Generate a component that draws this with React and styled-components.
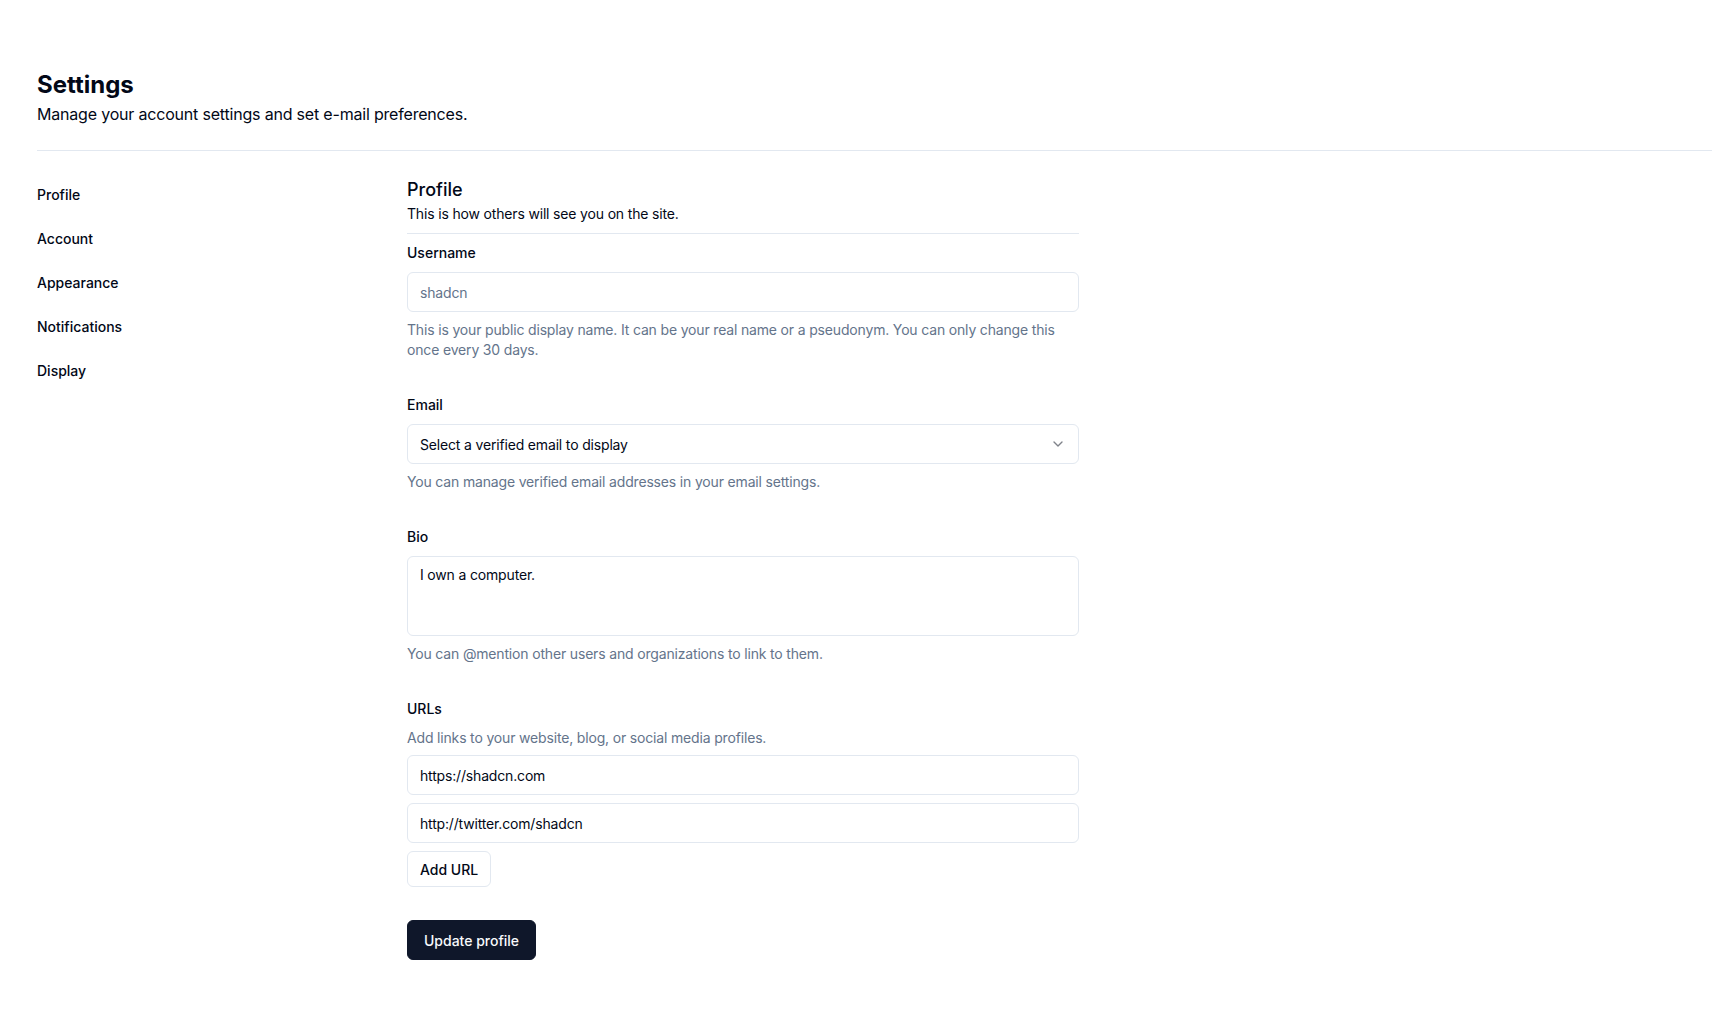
import React from "react";
import styled, { createGlobalStyle } from "styled-components";
import { ChevronDown } from "lucide-react";

const GlobalStyle = createGlobalStyle`
  * {
    box-sizing: border-box;
  }
  body {
    margin: 0;
    background: #ffffff;
    color: #020817;
    font-family: Inter, "Noto Sans", "Liberation Sans", sans-serif;
    -webkit-font-smoothing: antialiased;
  }
`;

const Page = styled.div`
  padding: 69px 0 64px 37px;
`;

const Header = styled.header`
  display: flex;
  flex-direction: column;
`;

const Title = styled.h2`
  margin: 0;
  font-size: 24px;
  line-height: 32px;
  font-weight: 700;
`;

const Lead = styled.p`
  margin: 1px 0 0;
  font-size: 16px;
  line-height: 24px;
  letter-spacing: -0.012em;
  color: #020817;
`;

const Separator = styled.hr`
  margin: ${(p) => p.$space || "0"};
  border: 0;
  height: 1px;
  background: #e2e8f0;
`;

const Body = styled.div`
  display: flex;
  gap: 48px;
`;

const Sidebar = styled.nav`
  width: 322px;
  flex-shrink: 0;
  display: flex;
  flex-direction: column;
  gap: 8px;
`;

const NavItem = styled.a`
  height: 36px;
  display: flex;
  align-items: center;
  font-size: 14px;
  font-weight: 500;
  color: #020817;
  text-decoration: none;
  cursor: pointer;
`;

const Content = styled.section`
  width: 672px;
`;

const SectionTitle = styled.h3`
  margin: 0;
  font-size: 18px;
  line-height: 28px;
  font-weight: 500;
`;

const SectionLead = styled.p`
  margin: 0;
  font-size: 14px;
  line-height: 20px;
  letter-spacing: -0.012em;
`;

const Form = styled.form`
  display: flex;
  flex-direction: column;
  gap: 35px;
`;

const Field = styled.div`
  display: flex;
  flex-direction: column;
`;

const Label = styled.label`
  font-size: 14px;
  line-height: 20px;
  font-weight: 500;
  margin-bottom: ${(p) => p.$gap || "9px"};
`;

const Description = styled.p`
  margin: ${(p) => p.$margin || "8px 0 0"};
  font-size: 14px;
  line-height: 20px;
  letter-spacing: -0.012em;
  color: #64748b;
`;

const Input = styled.input`
  width: 100%;
  height: 40px;
  padding: 0 12px;
  border: 1px solid #e2e8f0;
  border-radius: 6px;
  background: #fff;
  font-family: inherit;
  font-size: 14px;
  letter-spacing: -0.012em;
  color: #020817;
  outline: none;
  &::placeholder {
    color: #64748b;
  }
`;

const SelectBox = styled.button`
  width: 100%;
  height: 40px;
  padding: 0 12px;
  display: flex;
  align-items: center;
  justify-content: space-between;
  border: 1px solid #e2e8f0;
  border-radius: 6px;
  background: #fff;
  font-family: inherit;
  font-size: 14px;
  letter-spacing: -0.012em;
  color: #020817;
  svg {
    opacity: 0.5;
  }
`;

const TextArea = styled.textarea`
  width: 100%;
  height: 80px;
  padding: 8px 12px;
  border: 1px solid #e2e8f0;
  border-radius: 6px;
  font-family: inherit;
  font-size: 14px;
  line-height: 20px;
  letter-spacing: -0.012em;
  color: #020817;
  resize: none;
  outline: none;
`;

const UrlList = styled.div`
  display: flex;
  flex-direction: column;
  gap: 8px;
  align-items: flex-start;
`;

const Button = styled.button`
  height: ${(p) => (p.$primary ? "40px" : "36px")};
  padding: 0 ${(p) => (p.$primary ? "16px" : "12px")};
  border-radius: 6px;
  border: 1px solid ${(p) => (p.$primary ? "#0f172a" : "#e2e8f0")};
  background: ${(p) => (p.$primary ? "#0f172a" : "#fff")};
  color: ${(p) => (p.$primary ? "#f8fafc" : "#020817")};
  font-family: inherit;
  font-size: 14px;
  font-weight: 500;
  cursor: pointer;
`;

const Actions = styled.div`
  margin-top: -2px;
`;

const navItems = ["Profile", "Account", "Appearance", "Notifications", "Display"];

export default function App() {
  return (
    <>
      <GlobalStyle />
      <Page>
        <Header>
          <Title>Settings</Title>
          <Lead>Manage your account settings and set e-mail preferences.</Lead>
        </Header>
        <Separator $space="24px 0 25px" />
        <Body>
          <Sidebar>
            {navItems.map((item) => (
              <NavItem key={item}>{item}</NavItem>
            ))}
          </Sidebar>
          <Content>
            <SectionTitle>Profile</SectionTitle>
            <SectionLead>This is how others will see you on the site.</SectionLead>
            <Separator $space="9px 0 9px" />
            <Form onSubmit={(e) => e.preventDefault()}>
              <Field>
                <Label>Username</Label>
                <Input placeholder="shadcn" />
                <Description>
                  This is your public display name. It can be your real name or a
                  pseudonym. You can only change this once every 30 days.
                </Description>
              </Field>
              <Field>
                <Label>Email</Label>
                <SelectBox type="button">
                  <span>Select a verified email to display</span>
                  <ChevronDown size={16} strokeWidth={2} />
                </SelectBox>
                <Description>
                  You can manage verified email addresses in your email settings.
                </Description>
              </Field>
              <Field>
                <Label>Bio</Label>
                <TextArea defaultValue="I own a computer." />
                <Description>
                  You can @mention other users and organizations to link to them.
                </Description>
              </Field>
              <Field>
                <Label $gap="9px">URLs</Label>
                <Description $margin="0 0 7px">
                  Add links to your website, blog, or social media profiles.
                </Description>
                <UrlList>
                  <Input defaultValue="https://shadcn.com" />
                  <Input defaultValue="http://twitter.com/shadcn" />
                  <Button type="button">Add URL</Button>
                </UrlList>
              </Field>
              <Actions>
                <Button $primary type="submit">Update profile</Button>
              </Actions>
            </Form>
          </Content>
        </Body>
      </Page>
    </>
  );
}
